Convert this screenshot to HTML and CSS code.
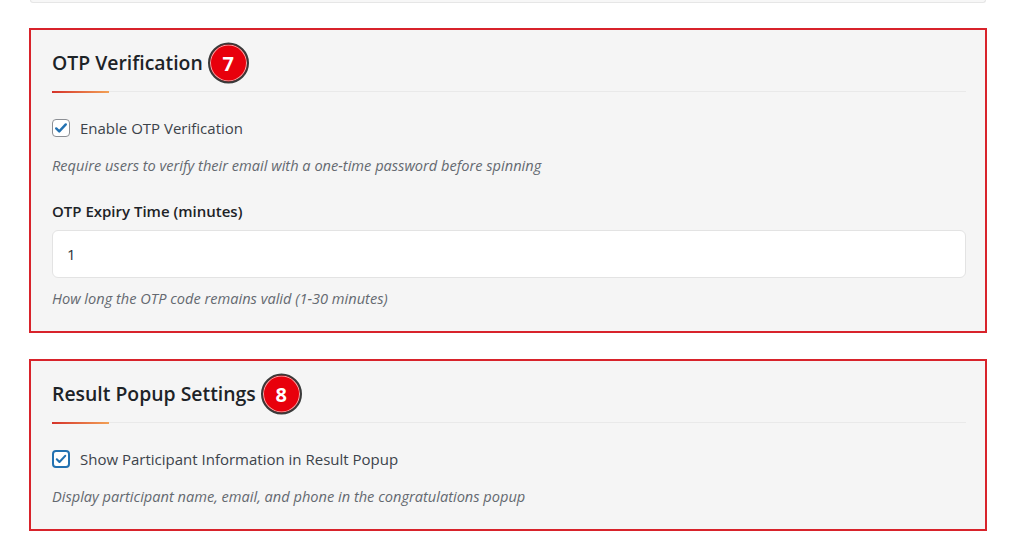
FILE: index.html
```html
<!DOCTYPE html>
<html lang="en">
<head>
    <meta charset="UTF-8">
    <meta name="viewport" content="width=device-width, initial-scale=1.0">
    <title>Settings</title>
    <link rel="stylesheet" href="styles.css">
</head>
<body>
    <div class="wrap">
        <div class="prev-card"></div>

        <div class="section">
            <h2 class="section-title"><span class="title-text">OTP Verification<span class="badge">7</span></span></h2>
            <label class="check-row">
                <span class="checkbox">
                    <svg viewBox="0 0 20 20" width="16" height="16"><path d="M4 10.5l3.8 3.8L16 5.5" fill="none" stroke="#2271b1" stroke-width="3" stroke-linecap="round" stroke-linejoin="round"/></svg>
                </span>
                Enable OTP Verification
            </label>
            <p class="description">Require users to verify their email with a one-time password before spinning</p>
            <div class="field-label">OTP Expiry Time (minutes)</div>
            <input type="text" class="text-input" value="1" readonly>
            <p class="description hint">How long the OTP code remains valid (1-30 minutes)</p>
        </div>

        <div class="section">
            <h2 class="section-title"><span class="title-text">Result Popup Settings<span class="badge">8</span></span></h2>
            <label class="check-row">
                <span class="checkbox focused">
                    <svg viewBox="0 0 20 20" width="16" height="16"><path d="M4 10.5l3.8 3.8L16 5.5" fill="none" stroke="#2271b1" stroke-width="3" stroke-linecap="round" stroke-linejoin="round"/></svg>
                </span>
                Show Participant Information in Result Popup
            </label>
            <p class="description">Display participant name, email, and phone in the congratulations popup</p>
        </div>
    </div>
</body>
</html>
```

FILE: styles.css
```css
* {
    margin: 0;
    padding: 0;
    box-sizing: border-box;
}

body {
    background: #fff;
    font-family: "Open Sans", "Noto Sans", sans-serif;
    color: #1d2327;
}

.wrap {
    width: 958px;
    margin-left: 29px;
}

.prev-card {
    height: 3px;
    margin: 0 1px;
    background: #f7f7f7;
    border: 1px solid #e6e6e6;
    border-top: none;
    border-radius: 0 0 6px 6px;
}

.section {
    margin-top: 25px;
    background: #f5f5f5;
    border: 2px solid #d8232b;
    padding: 19px 19px 23px 21px;
}

.section + .section {
    margin-top: 26px;
}

.section-title {
    position: relative;
    font-size: 19.4px;
    line-height: 28px;
    font-weight: 600;
    color: #1d2327;
    padding-bottom: 14px;
    border-bottom: 1px solid #e9e9e9;
    margin-bottom: 26px;
}

.section-title::after {
    content: "";
    position: absolute;
    left: 0;
    bottom: -2px;
    width: 57px;
    height: 2px;
    background: linear-gradient(90deg, #d5322a, #f2a055);
}

.title-text {
    position: relative;
}

.badge {
    position: absolute;
    left: 100%;
    top: 50%;
    margin-left: 5px;
    transform: translateY(-50%);
    width: 41px;
    height: 41px;
    border-radius: 50%;
    background: #e8000c;
    border: 2px solid #3a3a3a;
    box-shadow: inset 0 0 0 1px #f3b0b0;
    color: #fff;
    font-size: 20px;
    font-weight: 700;
    line-height: 37px;
    text-align: center;
}

.check-row {
    display: flex;
    align-items: center;
    gap: 10px;
    font-size: 15px;
    line-height: 20px;
    color: #3c434a;
}

.checkbox {
    display: flex;
    align-items: center;
    justify-content: center;
    width: 18px;
    height: 18px;
    background: #fff;
    border: 1px solid #8c8f94;
    border-radius: 4px;
}

.checkbox.focused {
    border: 2px solid #2271b1;
}

.description {
    margin-top: 17px;
    font-size: 14.6px;
    line-height: 20px;
    font-style: italic;
    color: #646970;
}

.field-label {
    margin-top: 26px;
    font-size: 15px;
    line-height: 20px;
    font-weight: 600;
    color: #1d2327;
}

.text-input {
    display: block;
    width: 100%;
    height: 48px;
    margin-top: 9px;
    padding: 0 14px;
    background: #fff;
    border: 1px solid #e3e3e3;
    border-radius: 6px;
    font-family: inherit;
    font-size: 15px;
    color: #2c3338;
    outline: none;
}

.hint {
    margin-top: 10px;
}
```
